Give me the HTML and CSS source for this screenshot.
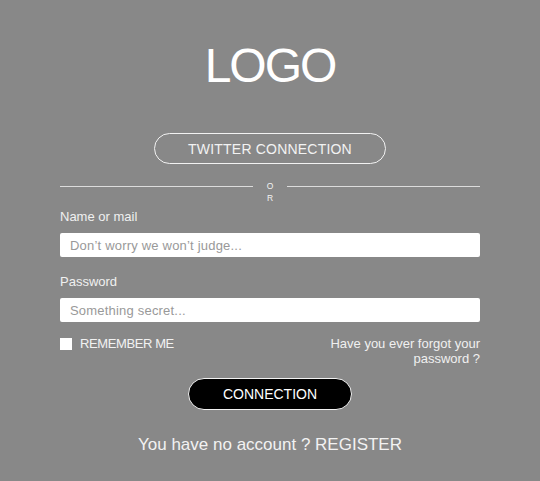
FILE: index.html
```html
<!DOCTYPE html>
<html lang="en">
<head>
<meta charset="utf-8">
<title>Login</title>
<link rel="stylesheet" href="styles.css">
</head>
<body>
<main class="login">
  <h1 class="logo">LOGO</h1>
  <button class="btn-outline" type="button">TWITTER CONNECTION</button>
  <div class="divider">
    <span class="divider-line"></span>
    <span class="divider-text"><span>O</span><span>R</span></span>
    <span class="divider-line"></span>
  </div>
  <form class="form">
    <label class="field">
      <span class="field-label">Name or mail</span>
      <input class="field-input" type="text" placeholder="Don’t worry we won’t judge...">
    </label>
    <label class="field">
      <span class="field-label">Password</span>
      <input class="field-input" type="password" placeholder="Something secret...">
    </label>
    <div class="options">
      <label class="remember"><span class="checkbox"></span>REMEMBER ME</label>
      <a class="forgot" href="#">Have you ever forgot your<br>password ?</a>
    </div>
    <button class="btn-solid" type="submit">CONNECTION</button>
  </form>
  <p class="register">You have no account ? REGISTER</p>
</main>
</body>
</html>
```
FILE: styles.css
```css
* { box-sizing: border-box; }
html, body {
  margin: 0;
  padding: 0;
  background: #888888;
  font-family: "Liberation Sans", Arial, sans-serif;
  color: #f2f2f2;
}
.login {
  width: 420px;
  margin: 0 auto;
  padding-top: 42px;
  display: flex;
  flex-direction: column;
  align-items: center;
}
.logo {
  margin: 0;
  font-size: 48px;
  line-height: 48px;
  font-weight: 400;
  letter-spacing: -2px;
  color: #ffffff;
  height: 48px;
}
.btn-outline {
  margin-top: 43px;
  width: 232px;
  height: 31px;
  border: 1px solid #f2f2f2;
  border-radius: 16px;
  background: transparent;
  color: #f2f2f2;
  font-family: inherit;
  font-size: 14px;
  letter-spacing: 0.2px;
  padding: 0;
}
.divider {
  margin-top: 16px;
  width: 100%;
  height: 29px;
  display: flex;
  align-items: flex-start;
}
.divider-line {
  flex: 1;
  height: 1px;
  margin-top: 6px;
  background: #dcdcdc;
}
.divider-text {
  width: 34px;
  display: flex;
  flex-direction: column;
  align-items: center;
  font-size: 8.5px;
  line-height: 12px;
  color: #f2f2f2;
}
.form {
  width: 100%;
  display: flex;
  flex-direction: column;
}
.field {
  display: flex;
  flex-direction: column;
  gap: 8px;
  margin-bottom: 17px;
}
.field-label {
  font-size: 13px;
  line-height: 16px;
  color: #f0f0f0;
}
.field-input {
  width: 100%;
  height: 24px;
  border: none;
  border-radius: 2px;
  background: #ffffff;
  padding: 0 9px 0 10px;
  font-family: inherit;
  font-size: 13px;
  letter-spacing: 0.2px;
  color: #444;
  outline: none;
}
.field-input::placeholder { color: #999999; }
.options {
  margin-top: -4px;
  display: flex;
  justify-content: space-between;
  align-items: flex-start;
  font-size: 13px;
  line-height: 15px;
}
.remember {
  display: flex;
  align-items: center;
  gap: 8px;
  padding-top: 1px;
  letter-spacing: -0.4px;
}
.checkbox {
  width: 12px;
  height: 12px;
  background: #ffffff;
}
.forgot {
  color: #f0f0f0;
  text-decoration: none;
  text-align: right;
  padding-top: 1px;
}
.btn-solid {
  align-self: center;
  margin-top: 12px;
  width: 164px;
  height: 32px;
  border: 1px solid #f2f2f2;
  border-radius: 16px;
  background: #000000;
  color: #ffffff;
  font-family: inherit;
  font-size: 14px;
  padding: 0;
}
.register {
  margin: 25px 0 0;
  font-size: 17px;
  line-height: 20px;
  color: #f2f2f2;
}
```
